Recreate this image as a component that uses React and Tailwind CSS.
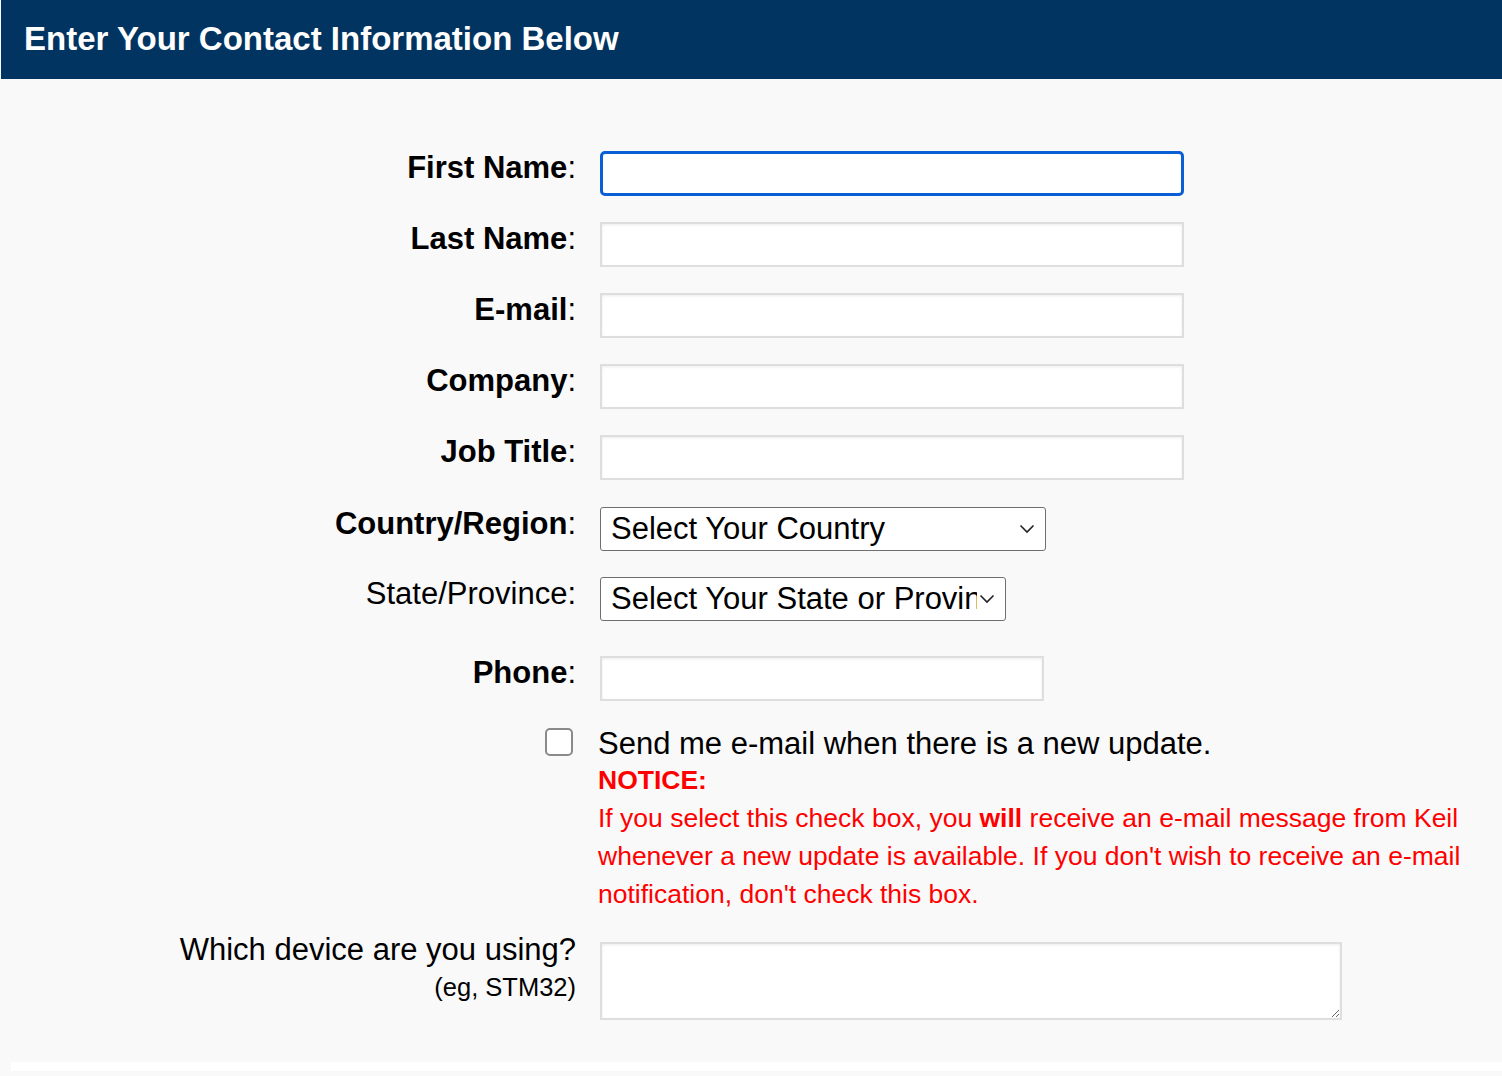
import React from 'react';

const font = { fontFamily: '"Liberation Sans", Arial, Helvetica, sans-serif' };

function Label({ children, bold = true }) {
  return (
    <div className="w-[576px] shrink-0 text-right text-[31px] leading-[34px] text-black">
      {bold ? <b>{children}</b> : children}:
    </div>
  );
}

function TextInput({ focused = false, width = 'w-[584px]' }) {
  if (focused) {
    return (
      <input
        type="text"
        className={`${width} h-[45px] bg-white border-[3px] border-[#0b5fd4] rounded-[5px] outline-none`}
      />
    );
  }
  return (
    <input
      type="text"
      className={`${width} h-[45px] bg-white border-2 border-[#dedede] shadow-[inset_0_1px_3px_rgba(0,0,0,0.08)] outline-none`}
    />
  );
}

function Select({ text, width }) {
  return (
    <div
      className={`${width} h-[44px] bg-white border border-[#6f6f6f] rounded-[3px] flex items-center pl-[10px] pr-[10px] overflow-hidden`}
    >
      <span className="flex-1 whitespace-nowrap overflow-hidden text-[31px] leading-[34px] text-black">{text}</span>
      <svg width="16" height="10" viewBox="0 0 16 10" className="shrink-0 ml-[2px]">
        <path d="M1.5 1.5 L8 8 L14.5 1.5" fill="none" stroke="#222" strokeWidth="1.6" />
      </svg>
    </div>
  );
}

export default function App() {
  return (
    <div className="w-[1502px] min-h-[1076px] bg-[#f9f9f9]" style={font}>
      <div className="h-[79px] ml-[1px] bg-[#013461] flex items-center pl-[23px]">
        <h1 className="text-white font-bold text-[33px] leading-none mt-[-3px]">
          Enter Your Contact Information Below
        </h1>
      </div>

      <div className="mr-[2px] bg-[#f9f9f9] pt-[72px] pb-[42px]">
        <div className="flex flex-col">
          <div className="flex items-start gap-[24px]">
            <Label>First Name</Label>
            <TextInput focused />
          </div>
          <div className="flex items-start gap-[24px] mt-[26px]">
            <Label>Last Name</Label>
            <TextInput />
          </div>
          <div className="flex items-start gap-[24px] mt-[26px]">
            <Label>E-mail</Label>
            <TextInput />
          </div>
          <div className="flex items-start gap-[24px] mt-[26px]">
            <Label>Company</Label>
            <TextInput />
          </div>
          <div className="flex items-start gap-[24px] mt-[26px]">
            <Label>Job Title</Label>
            <TextInput />
          </div>
          <div className="flex items-start gap-[24px] mt-[27px]">
            <Label>Country/Region</Label>
            <Select text="Select Your Country" width="w-[446px]" />
          </div>
          <div className="flex items-start gap-[24px] mt-[26px]">
            <Label bold={false}>State/Province</Label>
            <Select text="Select Your State or Province" width="w-[406px]" />
          </div>
          <div className="flex items-start gap-[24px] mt-[35px]">
            <Label>Phone</Label>
            <TextInput width="w-[444px]" />
          </div>

          <div className="flex items-start gap-[22px] mt-[27px]">
            <div className="w-[576px] shrink-0 flex justify-end pr-[3px]">
              <span className="block w-[28px] h-[28px] bg-white border-2 border-[#8a8a8a] rounded-[5px]" />
            </div>
            <div className="w-[880px]">
              <div className="text-[31px] leading-[32px] text-black">Send me e-mail when there is a new update.</div>
              <div className="mt-[2px] text-[#ff0000] text-[26.5px] leading-[37px] font-bold">NOTICE:</div>
              <p className="text-[#ff0000] text-[26.5px] leading-[38px]">
                If you select this check box, you <b>will</b> receive an e-mail message from Keil whenever a new update is
                available. If you don't wish to receive an e-mail notification, don't check this box.
              </p>
            </div>
          </div>

          <div className="flex items-start gap-[24px] mt-[20px]">
            <div className="w-[576px] shrink-0 text-right text-black">
              <div className="text-[31px] leading-[34px]">Which device are you using?</div>
              <div className="text-[25.5px] leading-[40px]">(eg, STM32)</div>
            </div>
            <textarea className="mt-[9px] w-[742px] h-[78px] bg-white border-2 border-[#dedede] shadow-[inset_0_1px_3px_rgba(0,0,0,0.08)] outline-none resize" />
          </div>
        </div>
      </div>

      <div className="pl-[11px]">
        <div className="h-[9px] bg-white" />
      </div>
    </div>
  );
}
